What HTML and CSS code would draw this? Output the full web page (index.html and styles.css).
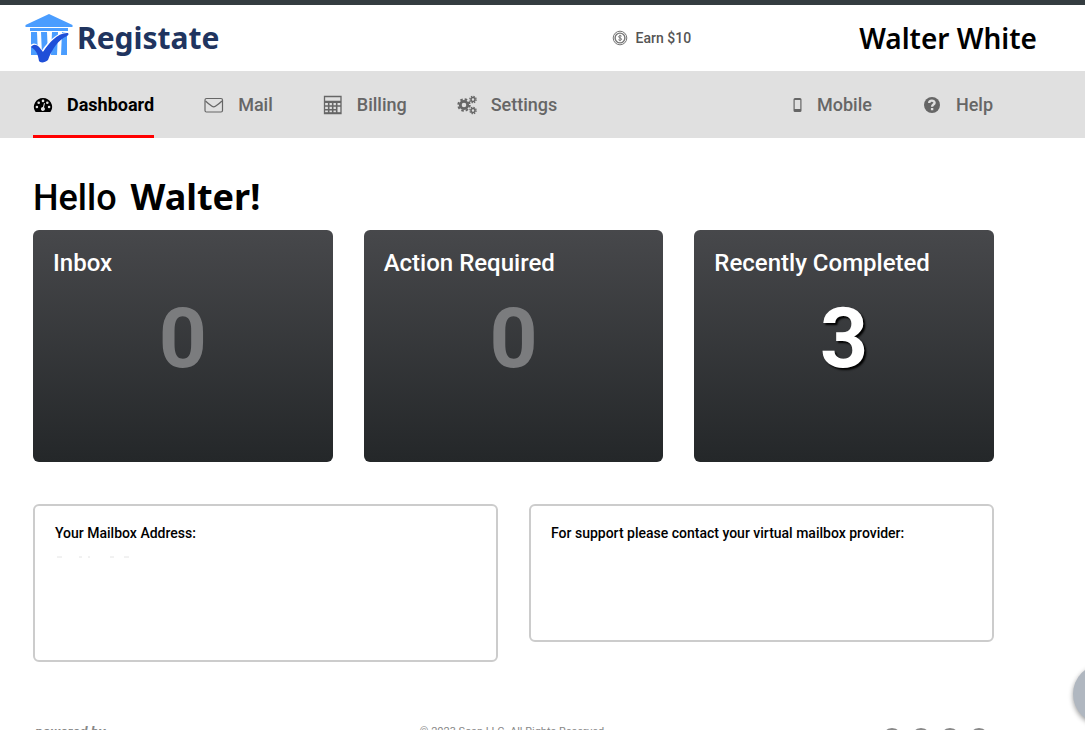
FILE: index.html
```html
<!DOCTYPE html>
<html lang="en">
<head>
<meta charset="utf-8">
<meta name="viewport" content="width=device-width, initial-scale=1">
<title>Registate – Dashboard</title>
<link rel="stylesheet" href="styles.css">
</head>
<body>
<header class="header">
  <a class="brand" href="#">
    <svg class="brand-mark" viewBox="0 0 48 50" aria-hidden="true">
      <path fill="#4a9dff" d="M24 1 47.500 12v2H.5v-2ZM5 15h38v3H5ZM6 19h6l1 23H6ZM16 19h6l1 23h-6ZM27 19h6l-1 23h-6ZM37 19h5v23h-6Z"/>
      <path fill="none" stroke="#fff" stroke-width="2" d="M6 33C10 29 13 34 17 39C23 30 31 21 42 20"/>
      <path fill="#1f4fd8" d="M6 34C10 29 14 33 18 39C24 30 32 20 42 20C44 20 44 22 42 23C33 27 27 36 23 47C20 50 15 50 14 48C13 41 11 37 6 34Z"/>
    </svg>
    <span class="brand-name">Registate</span>
  </a>
  <a class="earn" href="#">
    <svg class="earn-icon" viewBox="0 0 16 16" fill="none" stroke="#777" aria-hidden="true">
      <circle cx="8" cy="8" r="6.800"/><circle cx="8" cy="8" r="4.900" stroke-width="1.400"/>
      <path d="M9.600 6.200C8.800 5.300 6.600 5.500 6.600 6.800C6.600 8.300 9.600 7.600 9.600 9.200C9.600 10.500 7.200 10.700 6.400 9.700M8 4.800v6.400"/>
    </svg>
    Earn $10
  </a>
  <span class="user">Walter White</span>
</header>

<nav class="nav" aria-label="Main">
  <a class="nav-link active" href="#" aria-current="page">
    <svg class="icon" viewBox="0 0 20 20" aria-hidden="true">
      <path fill="#000" d="M10 3a9 9 0 0 0-7.800 13.600q.3.400.8.400h14q.5 0 .8-.4A9 9 0 0 0 10 3Z"/>
      <g fill="#e0e0e0"><circle cx="3.900" cy="12" r="1.300"/><circle cx="5.700" cy="7.700" r="1.300"/><circle cx="10" cy="5.900" r="1.300"/><circle cx="14.300" cy="7.700" r="1.300"/><circle cx="16.100" cy="12" r="1.300"/><path d="m11 8 1 .3-1 4a2 2 0 1 1-1.100-.3Z"/></g>
    </svg>
    Dashboard
  </a>
  <a class="nav-link" href="#">
    <svg class="icon" viewBox="0 0 20 20" fill="none" stroke="#666" stroke-width="1.200" aria-hidden="true">
      <rect x="1" y="3.500" width="17.500" height="13.500" rx="1.500"/><path d="M1.500 6c2 2 4 3.500 6.500 5.300q1.700 1.200 3.400 0C14 9.500 16 8 18 6"/>
    </svg>
    Mail
  </a>
  <a class="nav-link" href="#">
    <svg class="icon" viewBox="0 0 20 20" fill="none" stroke="#666" stroke-width="1.300" aria-hidden="true">
      <path d="M1.500 1.500h16.500v17H1.500ZM2 6.500h16"/><path d="M2 7.300h16M2 11h16M2 14.800h12M5.700 7v11.500M9.700 7v11.500M13.700 7v11.500M2 18h16" stroke-width="1.600"/>
    </svg>
    Billing
  </a>
  <a class="nav-link" href="#">
    <svg class="icon" viewBox="0 0 20 20" fill="none" stroke="#666" aria-hidden="true">
      <circle cx="7" cy="10" r="3.700" stroke-width="2.800"/><circle cx="7" cy="10" r="5.700" stroke-width="2" stroke-dasharray="2.500 1.977"/>
      <circle cx="16" cy="4.500" r="2" stroke-width="1.500"/><circle cx="16" cy="4.500" r="3.200" stroke-width="1.200" stroke-dasharray="1.400 1.113"/>
      <circle cx="16" cy="15.500" r="2" stroke-width="1.500"/><circle cx="16" cy="15.500" r="3.200" stroke-width="1.200" stroke-dasharray="1.400 1.113"/>
    </svg>
    Settings
  </a>
  <a class="nav-link push" href="#">
    <svg class="icon-phone" viewBox="0 0 10 20" aria-hidden="true">
      <path fill="#666" fill-rule="evenodd" d="M2 3h5q1.500 0 1.500 1.500v11Q8.500 17 7 17H2Q.5 17 .5 15.500v-11Q.5 3 2 3ZM1.700 5v9h5.600V5Z"/>
    </svg>
    Mobile
  </a>
  <a class="nav-link" href="#">
    <svg class="icon" viewBox="0 0 20 20" fill="none" aria-hidden="true">
      <circle cx="10" cy="10" r="8" fill="#666"/><path stroke="#e0e0e0" stroke-width="2.400" d="M7.200 8C7.200 4.800 12.600 4.900 12.600 7.800C12.600 9.800 10.100 9.400 10.100 11.800M10.100 12.900v2.300"/>
    </svg>
    Help
  </a>
</nav>

<main class="main">
  <h1 class="greeting">Hello <span class="greeting-name">Walter!</span></h1>
  <div class="cards">
    <a class="card" href="#"><h2 class="card-title">Inbox</h2><span class="count">0</span></a>
    <a class="card" href="#"><h2 class="card-title">Action Required</h2><span class="count">0</span></a>
    <a class="card" href="#"><h2 class="card-title">Recently Completed</h2><span class="count filled">3</span></a>
  </div>
  <div class="panels">
    <section class="panel tall">
      Your Mailbox Address:
      <svg class="trace" viewBox="0 0 80 2" aria-hidden="true"><path stroke="#e4e4e4" stroke-dasharray="5 17 3 6 2 20 4 10" d="M2 1h76"/></svg>
    </section>
    <section class="panel">For support please contact your virtual mailbox provider:</section>
  </div>
</main>

<footer class="footer">
  <span class="powered">powered by</span>
  <span class="copyright">© 2023 Scan LLC. All Rights Reserved</span>
  <span class="social">
    <a class="dot" href="#" aria-label="Facebook"></a><a class="dot" href="#" aria-label="Twitter"></a><a class="dot" href="#" aria-label="LinkedIn"></a><a class="dot" href="#" aria-label="YouTube"></a>
  </span>
</footer>
<button class="chat" type="button" aria-label="Open chat"></button>
</body>
</html>
```
FILE: styles.css
```css
* {
  box-sizing: border-box;
}

html {
  scrollbar-width: none;
}

body {
  margin: 0;
  background: #fff;
  color: #000;
  font-family: Roboto, "Liberation Sans", sans-serif;
}

a {
  color: inherit;
  text-decoration: none;
}

.header {
  display: flex;
  align-items: center;
  height: 71px;
  padding: 0 48px 0 25px;
  border-top: 5px solid #343c40;
}

.brand {
  display: flex;
  align-items: center;
  gap: 4px;
}

.brand-mark {
  width: 48px;
  height: 50px;
}

.brand-name {
  color: #20345f;
  font: 700 30px/40px "Noto Sans", sans-serif;
}

.earn {
  display: flex;
  align-items: center;
  gap: 8px;
  margin-left: auto;
  color: #555;
  font-size: 14px;
  font-weight: 500;
}

.earn-icon {
  width: 16px;
  height: 16px;
}

.user {
  margin-left: 168px;
  font: 600 28px/40px "Noto Sans", sans-serif;
}

.nav {
  display: flex;
  gap: 50px;
  height: 67px;
  padding: 0 92px 0 33px;
  background: #e0e0e0;
}

.nav-link {
  display: flex;
  align-items: center;
  gap: 14px;
  border-bottom: 3px solid transparent;
  padding-top: 3px;
  color: #666;
  font-size: 18px;
  font-weight: 500;
}

.active {
  border-color: #f00;
  color: #000;
  font-weight: 700;
}

.push {
  margin-left: auto;
}

.icon {
  width: 20px;
  height: 20px;
}

.icon-phone {
  width: 10px;
  height: 20px;
}

.main {
  padding: 36px 91px 0 33px;
}

.greeting {
  display: flex;
  align-items: baseline;
  gap: 14px;
  margin: 0 0 8px;
  font-size: 36px;
  font-weight: 500;
  line-height: 48px;
}

.greeting-name {
  font-family: "Noto Sans", sans-serif;
  font-weight: 700;
  line-height: 40px;
}

.cards {
  display: grid;
  grid-template-columns: repeat(3, 1fr);
  gap: 31px;
}

.card {
  display: flex;
  flex-direction: column;
  min-height: 232px;
  padding: 17px 20px;
  border-radius: 6px;
  background: linear-gradient(#47484b, #242729);
  color: #fff;
}

.card-title {
  margin: 0;
  font-size: 24px;
  font-weight: 500;
  line-height: 32px;
}

.count {
  margin-top: 10px;
  color: #7b7c7e;
  font-size: 84px;
  font-weight: 700;
  line-height: 100px;
  text-align: center;
}

.filled {
  color: #fff;
  text-shadow: 2px 2px 2px #000;
}

.panels {
  display: grid;
  grid-template-columns: repeat(2, 1fr);
  align-items: start;
  gap: 31px;
  min-height: 200px;
  margin-top: 42px;
}

.panel {
  min-height: 138px;
  padding: 18px 20px;
  border: 2px solid #ccc;
  border-radius: 6px;
  font-size: 14px;
  font-weight: 500;
  line-height: 18px;
}

.tall {
  min-height: 158px;
}

.trace {
  display: block;
  width: 80px;
  height: 2px;
  margin-top: 14px;
}

.footer {
  display: grid;
  grid-template-columns: 1fr auto 1fr;
  padding: 18px 96px 16px 35px;
  color: #888;
  font-size: 12px;
  line-height: 20px;
}

.powered {
  font-size: 14px;
  font-style: italic;
  font-weight: 700;
}

.copyright {
  font-size: 11px;
}

.social {
  display: flex;
  justify-content: flex-end;
  gap: 9px;
}

.dot {
  width: 20px;
  height: 20px;
  margin-top: 6px;
  border-radius: 50%;
  background: #888;
}

.chat {
  position: fixed;
  right: -48px;
  bottom: 6px;
  width: 60px;
  height: 60px;
  border: 0;
  border-radius: 50%;
  background: #b0b7c0;
  box-shadow: 0 2px 5px rgb(0 0 0 / 40%);
}
```
